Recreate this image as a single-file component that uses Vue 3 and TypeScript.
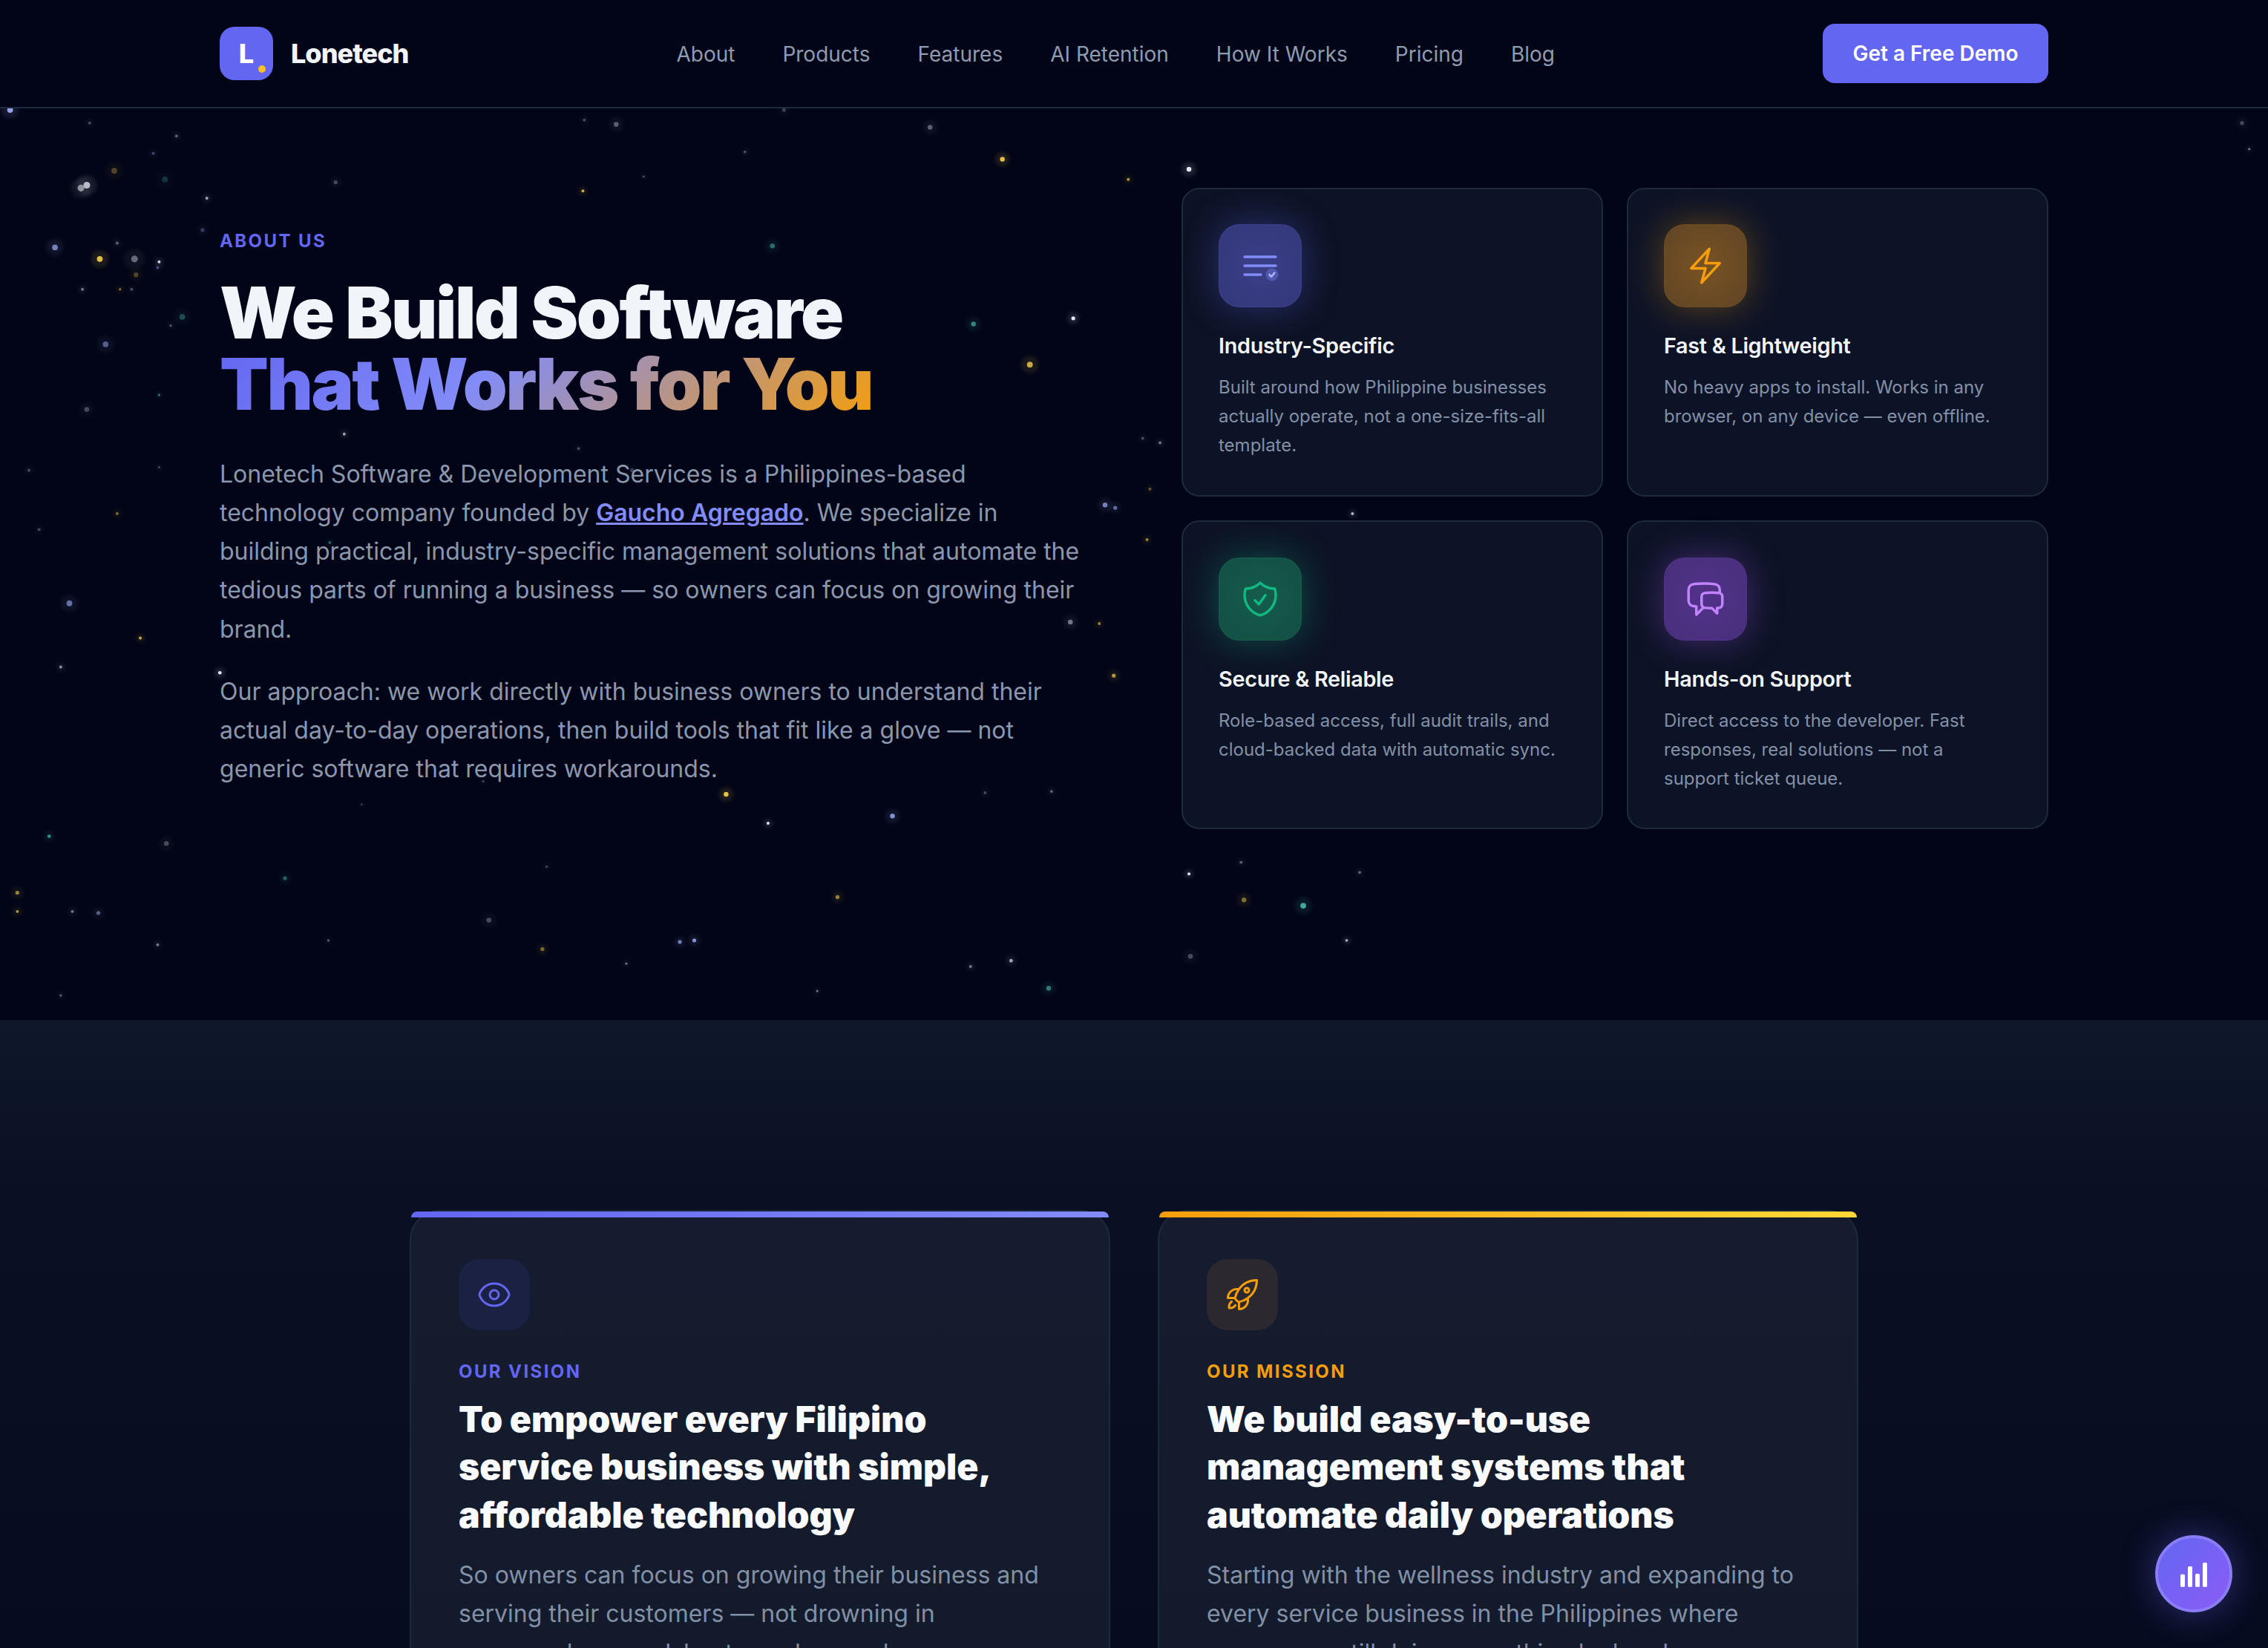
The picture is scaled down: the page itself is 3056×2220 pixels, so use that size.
<template>
  <div class="page">
    <header class="nav">
      <div class="brand">
        <span class="brand-mark">L<i class="brand-dot"></i></span>
        <span class="brand-name">Lonetech</span>
      </div>
      <nav class="nav-links">
        <a v-for="link in navLinks" :key="link">{{ link }}</a>
      </nav>
      <button class="demo-btn">Get a Free Demo</button>
    </header>

    <section class="hero">
      <svg class="stars" width="3056" height="1228" viewBox="0 146 3056 1228">
        <defs>
          <filter id="soft" x="-100%" y="-100%" width="300%" height="300%">
            <feGaussianBlur stdDeviation="0.7" />
          </filter>
          <filter id="halo" x="-100%" y="-100%" width="300%" height="300%">
            <feGaussianBlur stdDeviation="2.5" />
          </filter>
        </defs>
        <g v-for="(s, i) in stars" :key="i" :opacity="s.o">
          <circle :cx="s.x" :cy="s.y" :r="s.r * 3" :fill="s.c" opacity="0.12" filter="url(#halo)" />
          <circle :cx="s.x" :cy="s.y" :r="s.r" :fill="s.c" filter="url(#soft)" />
        </g>
      </svg>

      <div class="hero-copy">
        <p class="eyebrow">ABOUT US</p>
        <h1>We Build Software<br /><span class="grad">That Works for You</span></h1>
        <p class="lead">
          Lonetech Software &amp; Development Services is a Philippines-based technology company founded by
          <a class="founder">Gaucho Agregado</a>. We specialize in building practical, industry-specific management
          solutions that automate the tedious parts of running a business — so owners can focus on growing their brand.
        </p>
        <p class="lead">
          Our approach: we work directly with business owners to understand their actual day-to-day operations, then
          build tools that fit like a glove — not generic software that requires workarounds.
        </p>
      </div>

      <div class="features">
        <article v-for="f in features" :key="f.title" class="feature" :class="f.tone">
          <div class="feature-icon">
            <svg v-if="f.tone === 'indigo'" width="56" height="56" viewBox="0 0 56 56" fill="none">
              <path d="M7 16h42M7 28h42M7 40h22" stroke="#818cf8" stroke-width="3.4" stroke-linecap="round" />
              <circle cx="44" cy="40" r="8.5" fill="#818cf8" opacity="0.35" />
              <path d="M40.5 40l2.6 2.8 4.2-5.2" stroke="#a5b4fc" stroke-width="2.6" stroke-linecap="round" stroke-linejoin="round" />
            </svg>
            <svg v-else width="56" height="56" viewBox="0 0 24 24" fill="none" stroke="currentColor" stroke-width="1.5" stroke-linecap="round" stroke-linejoin="round">
              <path :d="f.icon" />
            </svg>
          </div>
          <h3>{{ f.title }}</h3>
          <p>{{ f.text }}</p>
        </article>
      </div>
    </section>

    <section class="purpose">
      <article v-for="c in purposeCards" :key="c.label" class="purpose-card" :class="c.tone">
        <div class="purpose-icon">
          <svg width="48" height="48" viewBox="0 0 24 24" fill="none" stroke="currentColor" stroke-width="1.5" stroke-linecap="round" stroke-linejoin="round">
            <path v-for="d in c.icons" :key="d" :d="d" />
          </svg>
        </div>
        <p class="purpose-label">{{ c.label }}</p>
        <h2>{{ c.title }}</h2>
        <p class="purpose-text">{{ c.text }}</p>
      </article>
    </section>

    <button class="fab" aria-label="Stats">
      <svg width="44" height="44" viewBox="0 0 44 44" fill="#fff">
        <rect x="4" y="22.7" width="6" height="17" rx="1.5" />
        <rect x="14" y="12" width="6" height="27.7" rx="1.5" />
        <rect x="24" y="22" width="6" height="17.7" rx="1.5" />
        <rect x="34" y="7" width="6" height="32.7" rx="1.5" />
      </svg>
    </button>
  </div>
</template>

<script setup lang="ts">
interface Star {
  x: number
  y: number
  r: number
  c: string
  o: number
}

const navLinks = ['About', 'Products', 'Features', 'AI Retention', 'How It Works', 'Pricing', 'Blog']

const features = [
  {
    tone: 'indigo',
    title: 'Industry-Specific',
    text: 'Built around how Philippine businesses actually operate, not a one-size-fits-all template.',
    icon: ''
  },
  {
    tone: 'amber',
    title: 'Fast & Lightweight',
    text: 'No heavy apps to install. Works in any browser, on any device — even offline.',
    icon: 'm3.75 13.5 10.5-11.25L12 10.5h8.25L9.75 21.75 12 13.5H3.75Z'
  },
  {
    tone: 'green',
    title: 'Secure & Reliable',
    text: 'Role-based access, full audit trails, and cloud-backed data with automatic sync.',
    icon: 'M9 12.75 11.25 15 15 9.75m-3-7.036A11.959 11.959 0 0 1 3.598 6 11.99 11.99 0 0 0 3 9.749c0 5.592 3.824 10.29 9 11.623 5.176-1.332 9-6.03 9-11.622 0-1.31-.21-2.571-.598-3.751h-.152c-3.196 0-6.1-1.248-8.25-3.285Z'
  },
  {
    tone: 'purple',
    title: 'Hands-on Support',
    text: 'Direct access to the developer. Fast responses, real solutions — not a support ticket queue.',
    icon: 'M20.25 8.511c.884.284 1.5 1.128 1.5 2.097v4.286c0 1.136-.847 2.1-1.98 2.193-.34.027-.68.052-1.02.072v3.091l-3-3c-1.354 0-2.694-.055-4.02-.163a2.115 2.115 0 0 1-.825-.242m9.345-8.334a2.126 2.126 0 0 0-.476-.095 48.64 48.64 0 0 0-8.048 0c-1.131.094-1.976 1.057-1.976 2.192v4.286c0 .837.46 1.58 1.155 1.951m9.345-8.334V6.637c0-1.621-1.152-3.026-2.76-3.235A48.455 48.455 0 0 0 11.25 3c-2.115 0-4.198.137-6.24.402-1.608.209-2.76 1.614-2.76 3.235v6.226c0 1.621 1.152 3.026 2.76 3.235.577.075 1.157.14 1.74.194V21l4.155-4.155'
  }
]

const purposeCards = [
  {
    tone: 'vision',
    label: 'OUR VISION',
    title: 'To empower every Filipino service business with simple, affordable technology',
    text: 'So owners can focus on growing their business and serving their customers — not drowning in paperwork, spreadsheets, and manual processes.',
    icons: [
      'M2.036 12.322a1.012 1.012 0 0 1 0-.639C3.423 7.51 7.36 4.5 12 4.5c4.638 0 8.573 3.007 9.963 7.178.07.207.07.431 0 .639C20.577 16.49 16.64 19.5 12 19.5c-4.638 0-8.573-3.007-9.963-7.178Z',
      'M15 12a3 3 0 1 1-6 0 3 3 0 0 1 6 0Z'
    ]
  },
  {
    tone: 'mission',
    label: 'OUR MISSION',
    title: 'We build easy-to-use management systems that automate daily operations',
    text: 'Starting with the wellness industry and expanding to every service business in the Philippines where owners are still doing everything by hand.',
    icons: [
      'M15.59 14.37a6 6 0 0 1-5.84 7.38v-4.8m5.84-2.58a14.98 14.98 0 0 0 6.16-12.12A14.98 14.98 0 0 0 9.631 8.41m5.96 5.96a14.926 14.926 0 0 1-5.841 2.58m-.119-8.54a6 6 0 0 0-7.381 5.84h4.8m2.581-5.84a14.927 14.927 0 0 0-2.58 5.84m2.699 2.7c-.103.021-.207.041-.311.06a15.09 15.09 0 0 1-2.448-2.448 14.9 14.9 0 0 1 .06-.312m-2.24 2.39a4.493 4.493 0 0 0-1.757 4.306 4.493 4.493 0 0 0 4.306-1.758M16.5 9a1.5 1.5 0 1 1-3 0 1.5 1.5 0 0 1 3 0Z'
    ]
  }
]

const tones: Record<string, string> = { w: '#e2e8f0', i: '#a5b4fc', g: '#fcd34d', t: '#5eead4' }

// star field: x, y (shrunk screenshot coords), radius, colour, opacity
const rawStars: [number, number, number, string, number][] = [
  [7, 76, 3, 'i', 0.9], [62, 85, 1.5, 'w', 0.3], [122, 94, 1.5, 'w', 0.4], [106, 106, 1.5, 'i', 0.4],
  [79, 118, 3, 'g', 0.3], [114, 124, 3, 't', 0.2], [60, 128, 3.5, 'w', 0.8], [56, 130, 3.5, 'w', 0.6],
  [143, 137, 1.5, 'w', 0.7], [140, 159, 2, 'i', 0.3], [38, 171, 3, 'i', 0.7], [81, 168, 1.5, 'w', 0.4],
  [69, 179, 3, 'g', 0.9], [93, 179, 3.5, 'w', 0.45], [110, 181, 1.5, 'w', 0.9], [109, 185, 1.5, 'i', 0.4],
  [94, 190, 2.5, 'g', 0.3], [57, 200, 1.5, 'w', 0.5], [83, 200, 1.2, 'g', 0.6], [126, 219, 3, 't', 0.3],
  [693, 110, 2.5, 'g', 0.9], [822, 117, 2.5, 'w', 1], [643, 88, 2.5, 'w', 0.4], [426, 86, 2.5, 'w', 0.4],
  [404, 83, 1.5, 'w', 0.3], [542, 76, 2, 'w', 0.25], [1550, 85, 2, 'w', 0.3], [1555, 103, 1.2, 'w', 0.5],
  [232, 126, 2, 'w', 0.3], [403, 132, 1.5, 'g', 0.8], [780, 124, 1.5, 'g', 0.7], [515, 105, 1.5, 'w', 0.3],
  [445, 122, 1.2, 'w', 0.3], [534, 170, 2.5, 't', 0.45], [673, 224, 2.5, 't', 0.55], [742, 220, 2, 'w', 1],
  [712, 252, 3, 'g', 0.8], [73, 238, 3, 'i', 0.5], [60, 283, 2.5, 'w', 0.3], [91, 200, 1.5, 'w', 0.3],
  [118, 225, 1.2, 'w', 0.4], [110, 273, 1.2, 't', 0.5], [238, 300, 1.5, 'w', 0.7], [210, 282, 1.5, 'w', 0.3],
  [764, 349, 2.5, 'i', 0.7], [771, 351, 2, 'i', 0.6], [802, 306, 1.5, 'w', 0.5], [790, 303, 1.5, 'w', 0.3],
  [795, 338, 1.5, 'g', 0.4], [793, 373, 1.5, 'g', 0.6], [740, 430, 2.5, 'w', 0.5], [760, 431, 1.5, 'g', 0.6],
  [770, 467, 2, 'g', 0.7], [727, 547, 1.5, 'w', 0.4], [502, 549, 2.5, 'g', 0.9], [531, 569, 1.5, 'w', 1],
  [617, 564, 2.5, 'i', 0.8], [681, 548, 1.5, 'w', 0.3], [935, 355, 1.5, 'w', 0.8], [48, 417, 3, 'i', 0.6],
  [97, 441, 1.5, 'g', 0.8], [42, 461, 1.5, 'w', 0.6], [152, 465, 1.8, 'w', 1], [27, 366, 1.5, 'w', 0.3],
  [81, 355, 1.5, 'g', 0.5], [20, 325, 1.5, 'w', 0.3], [110, 323, 1.2, 'w', 0.3], [115, 583, 2.5, 'w', 0.3],
  [34, 578, 1.8, 't', 0.6], [197, 607, 2, 't', 0.4], [12, 617, 2, 'g', 0.6], [12, 630, 1.5, 'g', 0.7],
  [50, 630, 1.5, 'w', 0.5], [68, 631, 2, 'i', 0.5], [109, 653, 1.5, 'w', 0.5], [227, 650, 1.2, 'w', 0.4],
  [338, 636, 2.5, 'w', 0.3], [375, 656, 2, 'g', 0.5], [470, 651, 2, 'i', 0.7], [480, 650, 2, 'i', 0.8],
  [433, 666, 1.2, 'w', 0.5], [378, 599, 1.2, 'w', 0.3], [579, 620, 2, 'g', 0.6], [860, 622, 2.5, 'g', 0.5],
  [858, 596, 1.5, 'w', 0.4], [822, 604, 1.5, 'w', 1], [901, 626, 3, 't', 0.7], [940, 603, 1.5, 'w', 0.4],
  [931, 650, 1.5, 'w', 0.7], [699, 664, 1.8, 'w', 0.7], [671, 668, 1.5, 'w', 0.5], [725, 683, 2.5, 't', 0.5],
  [823, 661, 2.5, 'w', 0.3], [565, 685, 1.2, 'w', 0.5], [42, 688, 1.2, 'w', 0.4], [250, 556, 1.2, 'w', 0.2],
  [400, 310, 1.5, 'w', 0.3], [437, 325, 2, 'w', 0.25], [228, 375, 1.5, 't', 0.4], [334, 540, 1.2, 'w', 0.3]
]

const stars: Star[] = rawStars.map(([x, y, r, c, o]) => ({
  x: x * 1.949,
  y: y * 1.949,
  r: r * 1.3,
  c: tones[c],
  o
}))
</script>

<style scoped>
.page {
  position: relative;
  height: 100vh;
  overflow: hidden;
  display: flex;
  flex-direction: column;
  background: #020517;
  color: #f1f5f9;
  font-family: Inter, "Liberation Sans", sans-serif;
}

.nav {
  flex: none;
  height: 146px;
  box-sizing: border-box;
  padding: 0 296px;
  display: flex;
  align-items: center;
  justify-content: space-between;
  border-bottom: 2px solid #1e293b;
  background: #020517;
}

.brand {
  display: flex;
  align-items: center;
  gap: 24px;
}

.brand-mark {
  position: relative;
  width: 72px;
  height: 72px;
  border-radius: 20px;
  background: #6366f1;
  display: flex;
  align-items: center;
  justify-content: center;
  color: #fff;
  font-size: 36px;
  font-weight: 800;
}

.brand-dot {
  position: absolute;
  right: 10px;
  bottom: 10px;
  width: 10px;
  height: 10px;
  border-radius: 50%;
  background: #fbbf24;
}

.brand-name {
  font-size: 36px;
  font-weight: 800;
  letter-spacing: -1px;
  color: #f1f5f9;
}

.nav-links {
  display: flex;
  gap: 64px;
  padding-top: 2px;
}

.nav-links a {
  font-size: 28px;
  color: #8e9bb0;
}

.demo-btn {
  width: 304px;
  height: 80px;
  border: none;
  border-radius: 16px;
  background: #6366f1;
  color: #fff;
  font-family: inherit;
  font-size: 28px;
  font-weight: 600;
}

.hero {
  position: relative;
  flex: none;
  height: 1228px;
  box-sizing: border-box;
  padding: 107px 296px 257px;
  display: grid;
  grid-template-columns: 1fr 1fr;
  gap: 128px;
  align-items: center;
  background: #020517;
}

.stars {
  position: absolute;
  left: 0;
  top: 0;
}

.hero-copy,
.features {
  position: relative;
}

.hero-copy {
  padding-top: 2px;
}

.eyebrow {
  margin: 0 0 34px;
  font-size: 24px;
  font-weight: 700;
  letter-spacing: 2.4px;
  color: #6366f1;
}

h1 {
  margin: 0 0 48px;
  font-size: 96px;
  line-height: 1;
  font-weight: 900;
  letter-spacing: -2.4px;
  color: #f1f5f9;
}

.grad {
  background: linear-gradient(135deg, #6366f1 0%, #818cf8 40%, #f59e0b 100%);
  -webkit-background-clip: text;
  background-clip: text;
  color: transparent;
}

.lead {
  margin: 0 0 32px;
  font-size: 32px;
  line-height: 52.2px;
  color: #8b97ac;
}

.lead:last-child {
  margin-bottom: 0;
}

.founder {
  color: #818cf8;
  font-weight: 600;
  text-decoration: underline;
}

.features {
  display: grid;
  grid-template-columns: 1fr 1fr;
  grid-auto-rows: 416px;
  gap: 32px;
}

.feature {
  box-sizing: border-box;
  padding: 47px 48px;
  border: 2px solid #1e293b;
  border-radius: 24px;
  background: #0d1326;
}

.feature:nth-child(n + 3) {
  padding-top: 48px;
}

.feature-icon {
  width: 112px;
  height: 112px;
  box-sizing: border-box;
  border-radius: 28px;
  display: flex;
  align-items: center;
  justify-content: center;
  border: 2px solid;
}

.indigo .feature-icon {
  color: #818cf8;
  background: radial-gradient(circle, #3a3f88, #33387a);
  border-color: #383d85;
  box-shadow: 0 0 48px rgba(99, 102, 241, 0.35);
}

.amber .feature-icon {
  color: #f59e0b;
  background: radial-gradient(circle, #7a5223, #5f4526);
  border-color: #6a4a22;
  box-shadow: 0 0 48px rgba(245, 158, 11, 0.35);
}

.green .feature-icon {
  color: #10b981;
  background: radial-gradient(circle, #155c4c, #124f43);
  border-color: #15574a;
  box-shadow: 0 0 48px rgba(16, 185, 129, 0.35);
}

.purple .feature-icon {
  color: #c084fc;
  background: radial-gradient(circle, #52318a, #47307a);
  border-color: #4d3183;
  box-shadow: 0 0 48px rgba(168, 85, 247, 0.35);
}

.feature h3 {
  margin: 32px 0 16px;
  font-size: 28.8px;
  line-height: 40px;
  font-weight: 600;
  letter-spacing: -0.3px;
  color: #f1f5f9;
}

.feature p {
  margin: 0;
  font-size: 24px;
  line-height: 39.2px;
  color: #8290a6;
}

.purpose {
  flex: 1;
  box-sizing: border-box;
  padding: 256px 0 0;
  display: grid;
  grid-template-columns: 944px 944px;
  justify-content: center;
  gap: 64px;
  align-items: start;
  background: linear-gradient(180deg, #0f172a 0, #0a1024 240px, #070b20 850px);
}

.purpose-card {
  position: relative;
  box-sizing: border-box;
  padding: 64px;
  border: 2px solid #1e293b;
  border-radius: 40px;
  background: linear-gradient(180deg, #161c2f, #121a2b);
}

.purpose-card::before {
  content: '';
  position: absolute;
  top: 0;
  left: 0;
  right: 0;
  height: 8px;
  border-radius: 10px 10px 0 0;
}

.vision::before {
  background: linear-gradient(90deg, #6366f1, #818cf8);
}

.mission::before {
  background: linear-gradient(90deg, #f59e0b, #fdd835);
}

.purpose-icon {
  width: 96px;
  height: 96px;
  border-radius: 28px;
  display: flex;
  align-items: center;
  justify-content: center;
}

.vision .purpose-icon {
  color: #6366f1;
  background: #1a2142;
}

.mission .purpose-icon {
  color: #f59e0b;
  background: #2b292f;
}

.purpose-label {
  margin: 41px 0 18px;
  font-size: 24px;
  font-weight: 700;
  letter-spacing: 2.4px;
}

.vision .purpose-label {
  color: #6366f1;
}

.mission .purpose-label {
  color: #f59e0b;
}

.purpose-card h2 {
  margin: 0 0 23px;
  font-size: 48px;
  line-height: 64.4px;
  font-weight: 900;
  color: #f8fafc;
}

.purpose-text {
  margin: 0;
  font-size: 32px;
  line-height: 52.2px;
  color: #8290a6;
}

.fab {
  position: absolute;
  right: 48px;
  bottom: 48px;
  width: 104px;
  height: 104px;
  box-sizing: border-box;
  padding: 0;
  border: 4px solid #8b7cf8;
  border-radius: 50%;
  background: linear-gradient(135deg, #6366f1, #8b5cf6);
  display: flex;
  align-items: center;
  justify-content: center;
  box-shadow: 0 0 48px rgba(99, 102, 241, 0.4);
}
</style>
